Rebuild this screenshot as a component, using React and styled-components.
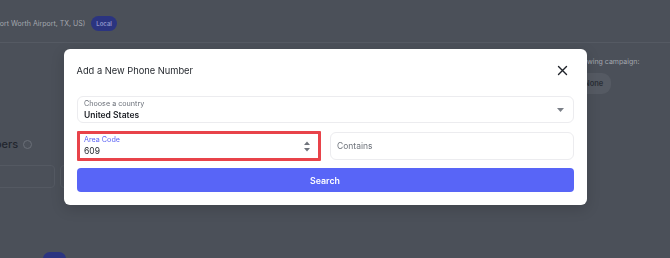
import styled, { createGlobalStyle } from "styled-components";

const GlobalStyle = createGlobalStyle`
  html, body {
    margin: 0;
    padding: 0;
    background: #4b5059;
    font-family: Inter, "Noto Sans", sans-serif;
    overflow: hidden;
  }
`;

const Page = styled.div`
  width: 670px;
  height: 258px;
  display: flex;
  flex-direction: column;
  overflow: hidden;
`;

const TopBar = styled.div`
  height: 43px;
  box-sizing: border-box;
  padding-top: 4px;
  display: flex;
  align-items: center;
  gap: 6px;
  margin-left: -4px;
  border-bottom: 1px solid #555a63;
  flex-shrink: 0;
`;

const DimText = styled.span`
  font-size: 7px;
  color: #a3a7ae;
  white-space: nowrap;
`;

const Badge = styled.span`
  background: #2b3480;
  color: #8f96c9;
  font-size: 6px;
  font-weight: 600;
  border-radius: 8px;
  padding: 4px 5px;
`;

const Body = styled.div`
  display: grid;
  grid-template-columns: 1fr 84px;
  flex: 1;
`;

const LeftCol = styled.div`
  display: flex;
  flex-direction: column;
  padding-top: 94px;
  margin-left: -30px;
`;

const SectionTitle = styled.div`
  display: flex;
  align-items: center;
  gap: 5px;
  font-size: 11px;
  font-weight: 500;
  color: #22262e;
`;

const InfoDot = styled.span`
  width: 7px;
  height: 7px;
  border: 1px solid #6a6f78;
  border-radius: 50%;
`;

const FakeInputs = styled.div`
  display: flex;
  gap: 5px;
  margin-top: 14px;
  margin-left: 13px;
`;

const FakeInput = styled.div`
  width: 70px;
  height: 21px;
  border: 1px solid #545962;
  border-radius: 4px;
`;

const BottomPill = styled.div`
  margin: 64px 0 0 73px;
  width: 23px;
  height: 14px;
  border-radius: 7px;
  background: #2b3480;
`;

const RightCol = styled.div`
  display: flex;
  flex-direction: column;
  padding-top: 14px;
  margin-left: -13px;
  gap: 7px;
`;

const GrayPill = styled.span`
  align-self: flex-start;
  margin-left: 3px;
  background: #555a63;
  color: #2a2e36;
  font-size: 7.5px;
  font-weight: 600;
  border-radius: 9px;
  padding: 6px 8px;
`;

const Overlay = styled.div`
  position: fixed;
  inset: 0;
  display: flex;
  align-items: flex-start;
  justify-content: center;
  padding-top: 49px;
`;

const Modal = styled.div`
  width: 523px;
  margin-left: -147px;
  margin-right: -147px;
  transform: translateX(-10px);
  background: #fff;
  border-radius: 6px;
  padding: 13px;
  box-sizing: border-box;
  display: flex;
  flex-direction: column;
  box-shadow: 0 4px 14px rgba(0, 0, 0, 0.15);
`;

const Header = styled.div`
  display: flex;
  align-items: center;
  justify-content: space-between;
  height: 16px;
  margin-bottom: 18px;
`;

const Title = styled.h2`
  margin: 0;
  font-size: 9.3px;
  font-weight: 400;
  color: #1f2329;
`;

const CloseBtn = styled.button`
  border: 0;
  background: none;
  padding: 0;
  margin-right: 6px;
  width: 11px;
  height: 11px;
  display: flex;
  cursor: pointer;
`;

const Field = styled.div`
  height: ${({ tall }) => (tall ? "27px" : "28px")};
  border: ${({ highlight }) =>
    highlight ? "3px solid #e8434a" : "1px solid #ececef"};
  border-radius: ${({ highlight }) => (highlight ? "1px" : "6px")};
  box-sizing: border-box;
  display: flex;
  align-items: center;
  padding: 0 ${({ highlight }) => (highlight ? "4.5px" : "6.5px")};
  margin: ${({ highlight }) => (highlight ? "-1px 0" : "0")};
`;

const FieldText = styled.div`
  flex: 1;
  display: flex;
  flex-direction: column;
  justify-content: center;
`;

const Label = styled.span`
  font-size: 7.2px;
  line-height: 10px;
  color: ${({ active }) => (active ? "#5b63f5" : "#6b7079")};
`;

const Value = styled.span`
  font-size: 8.5px;
  line-height: 12px;
  font-weight: ${({ bold }) => (bold ? 600 : 400)};
  color: #1c1f25;
`;

const Placeholder = styled.span`
  font-size: 8.5px;
  color: #6e737b;
`;

const Row = styled.div`
  display: grid;
  grid-template-columns: 1fr 1fr;
  gap: 9px;
  align-items: center;
  margin-top: 9px;
`;

const SearchBtn = styled.button`
  margin-top: 8px;
  height: 24px;
  border: 0;
  border-radius: 4px;
  background: #5865f7;
  color: #fff;
  font-family: inherit;
  font-size: 8.8px;
  font-weight: 600;
  cursor: pointer;
`;

function Caret() {
  return (
    <svg width="7" height="4" viewBox="0 0 7 4" style={{ marginRight: 2 }}>
      <path d="M0 0h7L3.5 4z" fill="#7a7f87" />
    </svg>
  );
}

function Spinner() {
  return (
    <svg width="6" height="11" viewBox="0 0 6 11" style={{ marginRight: 3 }}>
      <path d="M0 4L3 0.5 6 4z" fill="#70747c" />
      <path d="M0 7L3 10.5 6 7z" fill="#70747c" />
    </svg>
  );
}

export default function App() {
  return (
    <>
      <GlobalStyle />
      <Page>
        <TopBar>
          <DimText>Fort Worth Airport, TX, US)</DimText>
          <Badge>Local</Badge>
        </TopBar>
        <Body>
          <LeftCol>
            <SectionTitle>
              Numbers <InfoDot />
            </SectionTitle>
            <FakeInputs>
              <FakeInput />
              <FakeInput />
            </FakeInputs>
            <BottomPill />
          </LeftCol>
          <RightCol>
            <DimText>following campaign:</DimText>
            <GrayPill>None</GrayPill>
          </RightCol>
        </Body>
      </Page>
      <Overlay>
        <Modal>
          <Header>
            <Title>Add a New Phone Number</Title>
            <CloseBtn aria-label="Close">
              <svg width="11" height="11" viewBox="0 0 11 11">
                <path
                  d="M1.5 1.5l8 8M9.5 1.5l-8 8"
                  stroke="#1f2329"
                  strokeWidth="1.4"
                  strokeLinecap="round"
                />
              </svg>
            </CloseBtn>
          </Header>
          <Field tall>
            <FieldText>
              <Label>Choose a country</Label>
              <Value bold>United States</Value>
            </FieldText>
            <Caret />
          </Field>
          <Row>
            <Field highlight style={{ height: 30 }}>
              <FieldText>
                <Label active>Area Code</Label>
                <Value>609</Value>
              </FieldText>
              <Spinner />
            </Field>
            <Field>
              <Placeholder>Contains</Placeholder>
            </Field>
          </Row>
          <SearchBtn>Search</SearchBtn>
        </Modal>
      </Overlay>
    </>
  );
}
